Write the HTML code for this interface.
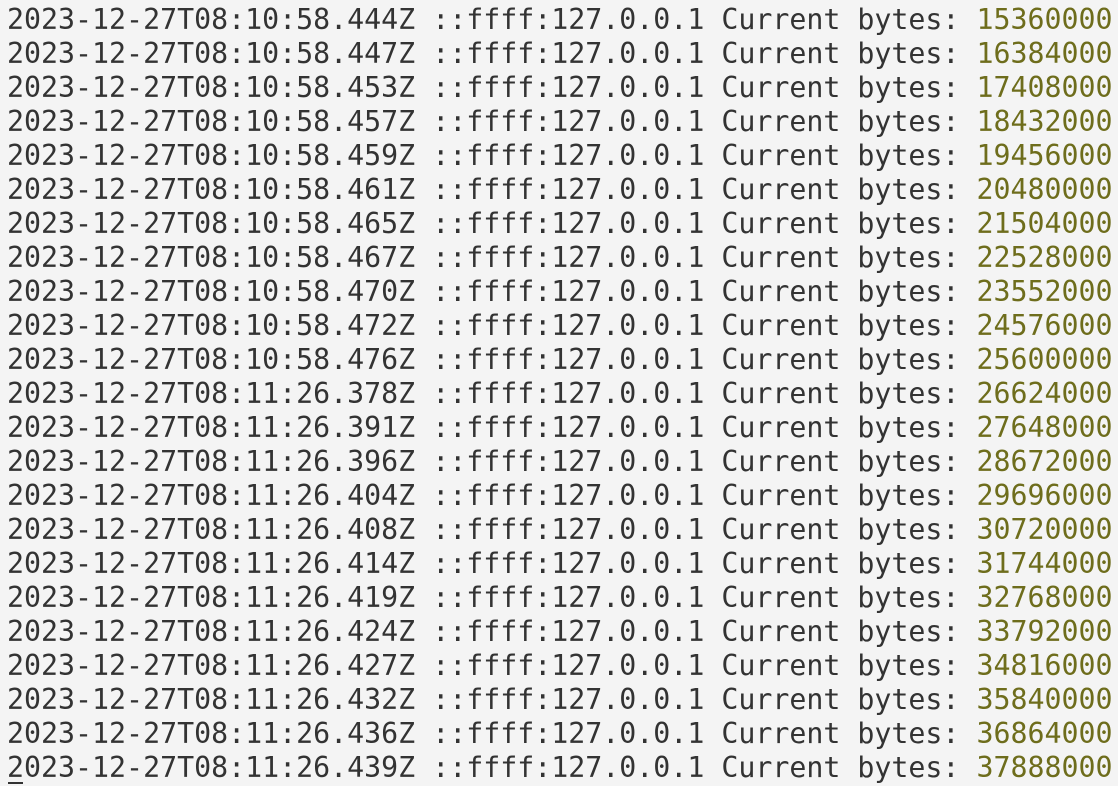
<!DOCTYPE html>
<html><head><meta charset="utf-8"><style>
html,body{margin:0;padding:0;background:#f4f4f4;width:1118px;height:786px;overflow:hidden}
pre{margin:0;position:absolute;left:7px;top:3px;font-family:"DejaVu Sans Mono","Liberation Mono",monospace;font-size:28.26px;line-height:34px;color:#333}
.n{color:#6e6d1c}
.cur{position:absolute;left:8px;top:782px;width:15px;height:2px;background:#333}
</style></head><body>
<pre>2023-12-27T08:10:58.444Z ::ffff:127.0.0.1 Current bytes: <span class="n">15360000</span>
2023-12-27T08:10:58.447Z ::ffff:127.0.0.1 Current bytes: <span class="n">16384000</span>
2023-12-27T08:10:58.453Z ::ffff:127.0.0.1 Current bytes: <span class="n">17408000</span>
2023-12-27T08:10:58.457Z ::ffff:127.0.0.1 Current bytes: <span class="n">18432000</span>
2023-12-27T08:10:58.459Z ::ffff:127.0.0.1 Current bytes: <span class="n">19456000</span>
2023-12-27T08:10:58.461Z ::ffff:127.0.0.1 Current bytes: <span class="n">20480000</span>
2023-12-27T08:10:58.465Z ::ffff:127.0.0.1 Current bytes: <span class="n">21504000</span>
2023-12-27T08:10:58.467Z ::ffff:127.0.0.1 Current bytes: <span class="n">22528000</span>
2023-12-27T08:10:58.470Z ::ffff:127.0.0.1 Current bytes: <span class="n">23552000</span>
2023-12-27T08:10:58.472Z ::ffff:127.0.0.1 Current bytes: <span class="n">24576000</span>
2023-12-27T08:10:58.476Z ::ffff:127.0.0.1 Current bytes: <span class="n">25600000</span>
2023-12-27T08:11:26.378Z ::ffff:127.0.0.1 Current bytes: <span class="n">26624000</span>
2023-12-27T08:11:26.391Z ::ffff:127.0.0.1 Current bytes: <span class="n">27648000</span>
2023-12-27T08:11:26.396Z ::ffff:127.0.0.1 Current bytes: <span class="n">28672000</span>
2023-12-27T08:11:26.404Z ::ffff:127.0.0.1 Current bytes: <span class="n">29696000</span>
2023-12-27T08:11:26.408Z ::ffff:127.0.0.1 Current bytes: <span class="n">30720000</span>
2023-12-27T08:11:26.414Z ::ffff:127.0.0.1 Current bytes: <span class="n">31744000</span>
2023-12-27T08:11:26.419Z ::ffff:127.0.0.1 Current bytes: <span class="n">32768000</span>
2023-12-27T08:11:26.424Z ::ffff:127.0.0.1 Current bytes: <span class="n">33792000</span>
2023-12-27T08:11:26.427Z ::ffff:127.0.0.1 Current bytes: <span class="n">34816000</span>
2023-12-27T08:11:26.432Z ::ffff:127.0.0.1 Current bytes: <span class="n">35840000</span>
2023-12-27T08:11:26.436Z ::ffff:127.0.0.1 Current bytes: <span class="n">36864000</span>
2023-12-27T08:11:26.439Z ::ffff:127.0.0.1 Current bytes: <span class="n">37888000</span></pre>
<div class="cur"></div>
</body></html>
